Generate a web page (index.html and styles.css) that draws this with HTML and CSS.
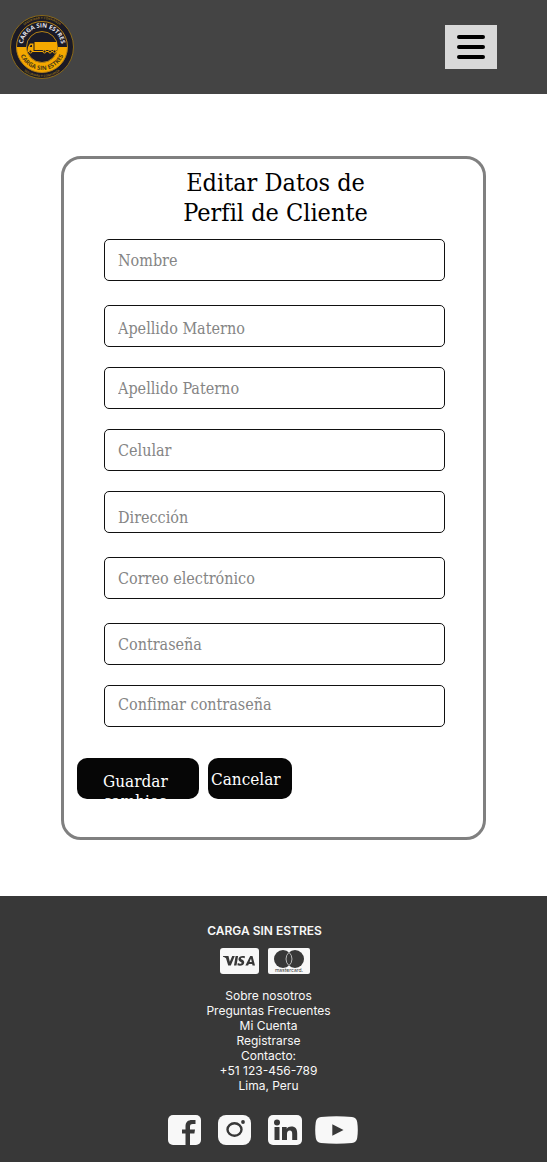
FILE: index.html
```html
<!DOCTYPE html>
<html lang="es">
<head>
<meta charset="utf-8">
<meta name="viewport" content="width=device-width, initial-scale=1">
<title>Editar Datos de Perfil de Cliente</title>
<link rel="stylesheet" href="styles.css">
</head>
<body>
<header class="topbar">
  <a class="logo" href="#" aria-label="Carga Sin Estres">
    <svg viewBox="0 0 64 66" width="64" height="66">
      <defs>
        <path id="arc-top" d="M12.500 33a19.500 19.500 0 0 1 39 0"/>
        <path id="arc-bottom" d="M9 33a23 23 0 0 0 46 0"/>
        <path id="arc-outer-top" d="M4 33a28 28 0 0 1 56 0"/>
        <path id="arc-outer-bottom" d="M2 33a30 30 0 0 0 60 0"/>
      </defs>
      <circle cx="32" cy="33" r="31.500" fill="#1b1a26" stroke="#8b6a18" stroke-width="1"/>
      <path d="M6.500 33a25.500 25.500 0 0 0 51 0z" fill="#f5a800"/>
      <circle cx="32" cy="33" r="25.500" fill="none" stroke="#b58217" stroke-width="1"/>
      <circle cx="32" cy="33" r="15.500" fill="#1b1a26" stroke="#b58217" stroke-width="1"/>
      <g class="logo-text" text-anchor="middle">
        <text class="logo-name" fill="#e4e4ea"><textPath href="#arc-top" startOffset="50%">CARGA SIN ESTRES</textPath></text>
        <text class="logo-name" fill="#4b3a16"><textPath href="#arc-bottom" startOffset="50%">CARGA SIN ESTRES</textPath></text>
        <text class="logo-motto" fill="#8b6a18"><textPath href="#arc-outer-top" startOffset="50%">SEGURIDAD Y CONFIANZA</textPath></text>
        <text class="logo-motto" fill="#8b6a18"><textPath href="#arc-outer-bottom" startOffset="50%">SEGURIDAD Y CONFIANZA</textPath></text>
      </g>
      <path d="M24.500 28h22.500v8h-22.500zM18 37v-4l2-3.500h3.500V37z" fill="#f5a800"/>
      <path d="M19.500 33l1.200-2h1.300v2z" fill="#1b1a26"/>
      <path d="M18 37.500h29" stroke="#f5a800" stroke-width="1"/>
      <g fill="#1b1a26" stroke="#f5a800" stroke-width="1">
        <circle cx="20.500" cy="37.500" r="1.500"/><circle cx="34.500" cy="37.500" r="1.500"/><circle cx="40" cy="37.500" r="1.500"/><circle cx="44.500" cy="37.500" r="1.500"/>
      </g>
    </svg>
  </a>
  <button class="menu" type="button" aria-label="Menú">
    <svg viewBox="0 0 28 24" width="28" height="24" stroke="#000" stroke-width="4" stroke-linecap="round"><path d="M2 2h24M2 12h24M2 22h24"/></svg>
  </button>
</header>

<main class="content">
  <form class="card">
    <h1 class="title">Editar Datos de<br>Perfil de Cliente</h1>
    <div class="fields">
      <input class="field" type="text" placeholder="Nombre" aria-label="Nombre">
      <input class="field field-spaced field-low" type="text" placeholder="Apellido Materno" aria-label="Apellido Materno">
      <input class="field" type="text" placeholder="Apellido Paterno" aria-label="Apellido Paterno">
      <input class="field" type="tel" placeholder="Celular" aria-label="Celular">
      <input class="field field-lower" type="text" placeholder="Dirección" aria-label="Dirección">
      <input class="field field-spaced" type="email" placeholder="Correo electrónico" aria-label="Correo electrónico">
      <input class="field field-spaced" type="password" placeholder="Contraseña" aria-label="Contraseña">
      <input class="field field-high" type="password" placeholder="Confimar contraseña" aria-label="Confimar contraseña">
    </div>
    <div class="actions">
      <button class="btn btn-save" type="submit">Guardar cambios</button>
      <button class="btn btn-cancel" type="button">Cancelar</button>
    </div>
  </form>
</main>

<footer class="footer">
  <h2 class="brand">CARGA SIN ESTRES</h2>
  <div class="payments">
    <svg role="img" aria-label="Visa" viewBox="0 0 39 26" width="39" height="26">
      <rect width="39" height="26" rx="3" fill="#f8f8f8"/>
      <g fill="#383838">
        <path d="M3 8h5.500l1.300 5.700L12.200 8h2.600l-4 9.500H8.200L6 10.200Q4.500 9 3 8.700z"/>
        <path d="M15.600 8h2.500l-1.600 9.500H14z"/>
        <path d="M25 8.300l-.4 2c-2-.8-3.700-.6-3.700.2 0 1 3.400 1.300 3.300 3.900-.1 3.100-4 3.900-6.800 2.800l.4-2.100c2.100 1 3.800.7 3.900-.2 0-1.100-3.300-1.200-3.200-3.900.1-2.900 3.700-3.700 6.500-2.700z"/>
        <path fill-rule="evenodd" d="M30.200 8h2.300l2.500 9.500h-2.500l-.3-1.500h-3.400l-.7 1.500h-2.700zM31 10.500l-1.400 3.500h2.200z"/>
      </g>
    </svg>
    <svg role="img" aria-label="Mastercard" viewBox="0 0 42 26" width="42" height="26">
      <rect width="42" height="26" rx="2" fill="#f8f8f8"/>
      <circle cx="15" cy="11" r="9" fill="#383838"/>
      <circle cx="27" cy="11" r="9" fill="#383838"/>
      <path d="M21 4.300a9 9 0 0 1 0 13.400a9 9 0 0 1 0-13.400z" fill="#383838" stroke="#d8d8d8" stroke-width=".8"/>
      <text class="mastercard-name" x="21" y="24" text-anchor="middle" fill="#383838">mastercard.</text>
    </svg>
  </div>
  <nav class="links">
    <a href="#">Sobre nosotros</a>
    <a href="#">Preguntas Frecuentes</a>
    <a href="#">Mi Cuenta</a>
    <a href="#">Registrarse</a>
    <span>Contacto:</span>
    <span>+51 123-456-789</span>
    <span>Lima, Peru</span>
  </nav>
  <div class="social">
    <a href="#" aria-label="Facebook"><svg viewBox="0 0 33 30" width="33" height="30"><rect width="33" height="30" rx="5" fill="#f8f8f8"/><path d="M17.500 30V18.500H14v-4h3.500v-3C17.500 7 20 5 24 5h3.500v4h-2.700c-2 0-2.800.8-2.800 2.500v3h5l-.6 4H22V30z" fill="#383838"/></svg></a>
    <a href="#" aria-label="Instagram"><svg viewBox="0 0 33 30" width="33" height="30"><rect width="33" height="30" rx="8" fill="#f8f8f8"/><ellipse cx="16.500" cy="14.500" rx="7" ry="6.300" fill="none" stroke="#383838" stroke-width="2.400"/><circle cx="25" cy="7" r="1.900" fill="#383838"/></svg></a>
    <a href="#" aria-label="LinkedIn"><svg viewBox="0 0 34 30" width="34" height="30"><rect width="34" height="30" rx="5" fill="#f8f8f8"/><g fill="#383838"><circle cx="9" cy="7.500" r="3"/><path d="M6.500 12h5v13h-5zM14 12h4.700v1.800c1-1.500 2.600-2.200 4.600-2.200 4.300 0 5.900 2.500 5.900 6.700V25h-5v-6c0-2-.5-3.400-2.400-3.400-2 0-2.800 1.500-2.800 3.400v6h-5z"/></g></svg></a>
    <a class="social-wide" href="#" aria-label="YouTube"><svg viewBox="0 0 43 28" width="43" height="28"><path d="M6 1Q21.500-.6 37 1q4.500.4 5.200 5 1.200 8 0 16-.7 4.600-5.200 5-15.500 1.600-31 0-4.500-.4-5.200-5-1.200-8 0-16Q1.500 1.400 6 1z" fill="#f8f8f8"/><path d="M17.300 8.200v11.600L28.500 14z" fill="#383838"/></svg></a>
  </div>
</footer>
</body>
</html>
```
FILE: styles.css
```css
* {
  box-sizing: border-box;
}

body {
  margin: 0;
  min-height: 100vh;
  display: flex;
  flex-direction: column;
  background: #fff;
  font-family: "DejaVu Serif Condensed", "DejaVu Serif", serif;
}

svg {
  display: block;
}

.topbar {
  display: flex;
  align-items: center;
  justify-content: space-between;
  min-height: 94px;
  padding: 0 50px 0 10px;
  background: #444;
}

.logo-text {
  font-family: "Open Sans", sans-serif;
  font-weight: 700;
}

.logo-name {
  font-size: 6px;
}

.logo-motto {
  font-size: 3px;
}

.menu {
  display: flex;
  align-items: center;
  justify-content: center;
  width: 52px;
  height: 44px;
  padding: 0;
  border: 0;
  background: #d9d9d9;
}

.content {
  padding: 62px 61px 56px;
}

.card {
  padding: 9px 0 38px;
  border: 3px solid #808080;
  border-radius: 20px;
}

.title {
  margin: 0 0 11px;
  padding-left: 4px;
  font-size: 25px;
  font-weight: 400;
  line-height: 30px;
  text-align: center;
}

.fields {
  display: flex;
  flex-direction: column;
  gap: 20px;
  padding: 0 38px 0 40px;
}

.field {
  width: 100%;
  height: 42px;
  padding: 0 13px;
  border: 1px solid #111;
  border-radius: 5px;
  background: #fff;
  font-family: inherit;
  font-size: 16px;
}

.field::placeholder {
  color: #858585;
  opacity: 1;
}

.field-spaced {
  margin-top: 4px;
}

.field-low {
  padding-top: 4px;
}

.field-lower {
  padding-top: 10px;
}

.field-high {
  padding-bottom: 4px;
}

.actions {
  display: flex;
  gap: 9px;
  margin-top: 31px;
  padding: 0 13px;
}

.btn {
  display: flex;
  align-items: flex-start;
  height: 41px;
  border: 0;
  border-radius: 10px;
  background: #060606;
  color: #fff;
  font-family: inherit;
  font-size: 17px;
  line-height: 20px;
  text-align: left;
  overflow: hidden;
}

.btn-save {
  width: 122px;
  padding: 13px 26px 0;
}

.btn-cancel {
  width: 84px;
  padding: 11px 3px 0;
}

.footer {
  flex: 1;
  display: flex;
  flex-direction: column;
  align-items: center;
  padding: 27px 10px 16px 0;
  background: #383838;
  color: #f8f8f8;
  font-family: Inter, sans-serif;
  font-size: 12px;
  line-height: 15px;
}

.brand {
  margin: 0;
  padding-right: 8px;
  font-size: 12px;
  font-weight: 600;
}

.payments {
  display: flex;
  gap: 9px;
  margin-top: 10px;
  padding-right: 8px;
}

.mastercard-name {
  font-family: Inter, sans-serif;
  font-size: 5px;
}

.links {
  display: flex;
  flex-direction: column;
  align-items: center;
  margin-top: 14px;
}

.links a {
  color: inherit;
  text-decoration: none;
}

.social {
  display: flex;
  align-items: center;
  gap: 17px;
  margin-top: 22px;
  padding-right: 12px;
}

.social-wide {
  margin-left: -4px;
}
```
